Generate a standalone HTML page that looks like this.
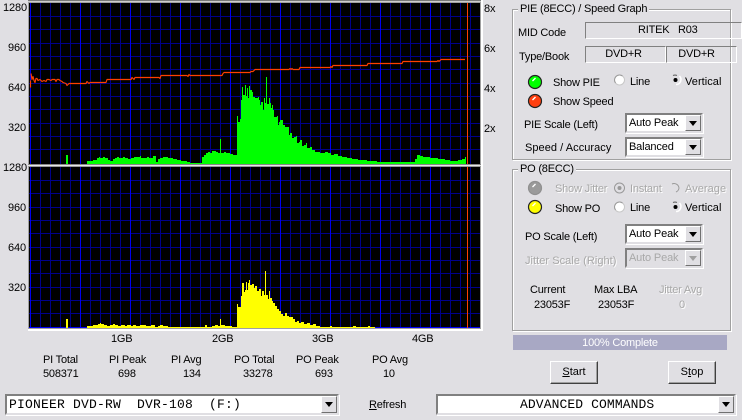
<!DOCTYPE html>
<html><head><meta charset="utf-8"><style>
html,body{margin:0;padding:0;width:742px;height:420px;overflow:hidden;background:#e0dfe3}
body{position:relative;font-family:"Liberation Sans",sans-serif;font-size:11px;color:#000}
.t{position:absolute;line-height:13px;white-space:pre;margin-top:1px;letter-spacing:-.2px}
.a{margin-top:2px;letter-spacing:-.1px}
.w{letter-spacing:.05px}
.g{color:#a8a8a8;text-shadow:1px 1px 0 #fff}
.box{position:absolute;border:1px solid #a0a0a0;box-shadow:1px 1px 0 #fff,inset 1px 1px 0 #fff;box-sizing:border-box}
.title{position:absolute;background:#e0dfe3;padding:0 2px;line-height:13px;white-space:pre;letter-spacing:-.2px}
.f{position:absolute;box-sizing:border-box;border:1px solid;border-color:#808080 #fff #fff #808080;text-align:center;line-height:15px;white-space:pre;letter-spacing:-.2px}
.c{position:absolute;box-sizing:border-box;background:#fff;border:2px solid;border-color:#808080 #e0dfe3 #e0dfe3 #808080;box-shadow:1px 1px 0 #fff;line-height:16px;padding-left:2px;white-space:pre;font-size:11px;letter-spacing:-.15px}
.c i{position:absolute;right:0;top:0;bottom:0;width:16px;box-sizing:border-box;background:#e0dfe3;border:1px solid;border-color:#fff #707070 #707070 #fff}
.c i:after{content:"";position:absolute;left:3px;top:5px;border:4px solid transparent;border-top:5px solid #000;border-bottom:0}
.dis{background:#e0dfe3;color:#a8a8a8}
.dis i:after{border-top-color:#a0a0a0}
.b{position:absolute;box-sizing:border-box;background:#e0dfe3;border:1px solid;border-color:#fff #404040 #404040 #fff;box-shadow:inset -1px -1px 0 #a0a0a0;text-align:center;line-height:21px;font-size:11px}
svg{position:absolute;left:0;top:0}
</style></head><body>
<svg width="742" height="420" shape-rendering="crispEdges">
<rect x="28" y="0" width="455" height="331" fill="#fff"/>
<rect x="28" y="0" width="453" height="329" fill="#a0a0a0"/>
<rect x="29" y="3" width="451" height="161" fill="#000"/>
<rect x="29" y="167" width="451" height="161" fill="#000"/>
<rect x="28" y="164" width="453" height="1" fill="#888"/><rect x="28" y="165" width="453" height="1" fill="#e8e8e8"/><rect x="28" y="166" width="453" height="1" fill="#999"/>
<rect x="28" y="0" width="453" height="1" fill="#777"/><rect x="28" y="1" width="453" height="1" fill="#ccc"/>
<path fill="none" stroke="#00008c" d="M40.5 3V164M50.5 3V164M60.5 3V164M70.5 3V164M90.5 3V164M100.5 3V164M110.5 3V164M120.5 3V164M140.5 3V164M150.5 3V164M160.5 3V164M170.5 3V164M190.5 3V164M200.5 3V164M210.5 3V164M220.5 3V164M240.5 3V164M250.5 3V164M260.5 3V164M270.5 3V164M290.5 3V164M300.5 3V164M310.5 3V164M320.5 3V164M340.5 3V164M350.5 3V164M360.5 3V164M370.5 3V164M390.5 3V164M400.5 3V164M410.5 3V164M420.5 3V164M440.5 3V164M450.5 3V164M460.5 3V164M470.5 3V164
M40.5 167V328M50.5 167V328M60.5 167V328M70.5 167V328M90.5 167V328M100.5 167V328M110.5 167V328M120.5 167V328M140.5 167V328M150.5 167V328M160.5 167V328M170.5 167V328M190.5 167V328M200.5 167V328M210.5 167V328M220.5 167V328M240.5 167V328M250.5 167V328M260.5 167V328M270.5 167V328M290.5 167V328M300.5 167V328M310.5 167V328M320.5 167V328M340.5 167V328M350.5 167V328M360.5 167V328M370.5 167V328M390.5 167V328M400.5 167V328M410.5 167V328M420.5 167V328M440.5 167V328M450.5 167V328M460.5 167V328M470.5 167V328
M29 16.5H480M29 29.5H480M29 43.5H480M29 56.5H480M29 69.5H480M29 83.5H480M29 96.5H480M29 109.5H480M29 123.5H480M29 136.5H480M29 149.5H480
M29 180.5H480M29 193.5H480M29 207.5H480M29 220.5H480M29 233.5H480M29 247.5H480M29 260.5H480M29 273.5H480M29 287.5H480M29 300.5H480M29 313.5H480"/>
<path fill="none" stroke="#0000f0" d="M30.5 3V164M80.5 3V164M130.5 3V164M180.5 3V164M230.5 3V164M280.5 3V164M330.5 3V164M380.5 3V164M430.5 3V164M30.5 167V328M80.5 167V328M130.5 167V328M180.5 167V328M230.5 167V328M280.5 167V328M330.5 167V328M380.5 167V328M430.5 167V328M29 327.5H480"/>
<path fill="#00ff00" d="M66 164V155H68V164ZM87 164V161H93V160H97V158H99V157H100V158H103V157H105V158H108V160H110V161H113V159H115V158H117V157H119V158H123V157H125V158H128V159H131V158H134V157H140V156H141V158H147V157H149V158H153V156H156V162H158V159H160V158H163V157H168V158H173V159H177V160H181V161H187V162H190V163H202V157H204V155H206V153H208V152H210V153H212V151H216V152H218V153H220V139H221V153H224V152H226V153H230V154H233V155H237V116H238V122H240V119H241V100H242V87H243V95H245V85H246V96H247V88H248V98H249V86H250V90H252V92H253V97H255V98H258V97H259V100H260V105H261V102H263V110H264V98H265V103H266V77H267V104H269V98H270V103H271V108H272V105H273V110H274V117H277V116H278V125H279V122H280V120H283V125H285V127H289V135H290V133H292V138H294V137H296V136H297V143H299V142H300V140H302V146H304V145H306V143H307V148H310V147H312V150H315V152H320V153H325V152H328V153H331V155H334V154H338V156H342V157H347V158H352V159H358V160H367V161H377V162H415V159H417V155H420V156H423V157H430V158H438V159H445V160H450V161H458V160H462V159H465V157H466V164Z"/>
<path fill="#ffff00" d="M66 328V319H68V328ZM87 328V326H93V325H98V324H100V323H101V324H104V325H107V326H110V325H113V324H115V325H118V326H121V325H125V326H127V325H131V326H133V325H136V326H140V325H146V326H151V325H155V327H158V326H160V325H163V326H168V327H205V325H207V327H212V326H215V325H218V326H220V319H221V325H225V326H232V327H237V304H238V307H241V296H242V283H244V292H245V290H246V282H247V290H248V283H249V280H250V285H252V284H254V288H255V286H257V291H259V289H261V296H262V291H264V295H265V271H266V295H268V299H269V291H270V298H272V301H273V303H275V306H277V309H279V311H281V314H283V316H285V313H287V316H289V317H293V319H295V322H297V321H299V323H301V322H304V324H307V323H310V325H313V324H316V326H320V327H330V326H332V327H353V326H356V327H368V326H370V327H375V328Z"/>
<path fill="none" stroke="#ff4000" d="M467.5 3V164M467.5 167V328"/>
<rect x="513" y="335" width="214" height="15" fill="#a8a8c4"/>
</svg>
<svg width="742" height="420">
<path transform="translate(0 .5)" fill="none" stroke="#ff4000" stroke-width="1.150" stroke-linejoin="round" d="M30.5 87V80M31 73L32 79L33 76L34 80L35 82L36 78L37 78L38 80L40 79L42 81L44 80L46 81L47 79L49 79L51 80L52 79L55 79L56 81L57 79L59 79L60 80L62 81L63 82L66 83L67 85L69 83H86L87 81L88 82L89 83L90 82H106L107 79H131L132 77L133 78L134 79L135 77H159L160 78L161 75H187L188 76L189 74L190 75H222L223 73L224 72H250L251 71H253L255 69H289L290 68L291 69L292 68L293 69H299L300 67H330L331 66L332 67L333 65H367L368 63H402L403 61H437L438 60L439 61L441 59H465"/>
</svg>

<div class="t a" style="left:3px;top:0">1280</div><div class="t a" style="left:8px;top:40px">960</div><div class="t a" style="left:8px;top:80px">640</div><div class="t a" style="left:8px;top:120px">320</div>
<div class="t a" style="left:3px;top:160px">1280</div><div class="t a" style="left:8px;top:200px">960</div><div class="t a" style="left:8px;top:240px">640</div><div class="t a" style="left:8px;top:280px">320</div>
<div class="t a" style="left:484px;top:1px">8x</div><div class="t a" style="left:484px;top:41px">6x</div><div class="t a" style="left:484px;top:81px">4x</div><div class="t a" style="left:484px;top:121px">2x</div>
<div class="t" style="left:111px;top:332px">1GB</div><div class="t" style="left:212px;top:332px">2GB</div><div class="t" style="left:312px;top:332px">3GB</div><div class="t" style="left:412px;top:332px">4GB</div>

<div class="t" style="left:43px;top:353px">PI Total</div><div class="t" style="left:43px;top:367px">508371</div>
<div class="t" style="left:109px;top:353px">PI Peak</div><div class="t" style="left:118px;top:367px">698</div>
<div class="t" style="left:171px;top:353px">PI Avg</div><div class="t" style="left:183px;top:367px">134</div>
<div class="t" style="left:234px;top:353px">PO Total</div><div class="t" style="left:243px;top:367px">33278</div>
<div class="t" style="left:296px;top:353px">PO Peak</div><div class="t" style="left:315px;top:367px">693</div>
<div class="t" style="left:372px;top:353px">PO Avg</div><div class="t" style="left:383px;top:367px">10</div>

<div class="box" style="left:512px;top:9px;width:219px;height:151px"></div>
<div class="title" style="left:518px;top:3px">PIE (8ECC) / Speed Graph</div>
<div class="t" style="left:518px;top:26px">MID Code</div>
<div class="f" style="left:585px;top:22px;width:157px;height:17px;text-align:left;padding-left:52px">RITEK   R03</div>
<div class="t" style="left:519px;top:50px">Type/Book</div>
<div class="f" style="left:585px;top:46px;width:81px;height:17px;padding-right:4px">DVD+R</div>
<div class="f" style="left:666px;top:46px;width:71px;height:17px;padding-right:10px">DVD+R</div>
<div class="t" style="left:553px;top:76px">Show PIE</div><div class="t" style="left:630px;top:75px">Line</div><div class="t w" style="left:685px;top:75px">Vertical</div>
<div class="t" style="left:553px;top:95px">Show Speed</div>
<div class="t" style="left:524px;top:118px">PIE Scale (Left)</div>
<div class="c" style="left:625px;top:113px;width:78px;height:20px">Auto Peak<i></i></div>
<div class="t w" style="left:525px;top:141px">Speed / Accuracy</div>
<div class="c" style="left:625px;top:137px;width:78px;height:20px">Balanced<i></i></div>

<div class="box" style="left:512px;top:169px;width:219px;height:162px"></div>
<div class="title" style="left:518px;top:163px">PO (8ECC)</div>
<div class="t g" style="left:555px;top:182px">Show Jitter</div><div class="t g" style="left:630px;top:182px">Instant</div><div class="t g w" style="left:685px;top:182px">Average</div>
<div class="t" style="left:555px;top:202px">Show PO</div><div class="t" style="left:630px;top:201px">Line</div><div class="t w" style="left:685px;top:201px">Vertical</div>
<div class="t" style="left:525px;top:230px">PO Scale (Left)</div>
<div class="c" style="left:625px;top:224px;width:78px;height:20px">Auto Peak<i></i></div>
<div class="t g w" style="left:525px;top:254px">Jitter Scale (Right)</div>
<div class="c dis" style="left:625px;top:248px;width:78px;height:20px">Auto Peak<i></i></div>
<div class="t" style="left:530px;top:283px">Current</div><div class="t" style="left:534px;top:298px">23053F</div>
<div class="t" style="left:594px;top:283px">Max LBA</div><div class="t" style="left:598px;top:298px">23053F</div>
<div class="t g" style="left:659px;top:283px">Jitter Avg</div><div class="t g" style="left:679px;top:298px">0</div>
<div class="t" style="left:513px;top:336px;width:214px;text-align:center;color:#fff">100% Complete</div>

<div class="b" style="left:550px;top:361px;width:48px;height:23px"><u>S</u>tart</div>
<div class="b" style="left:668px;top:361px;width:48px;height:23px">S<u>t</u>op</div>

<div class="c" style="left:5px;top:394px;width:334px;height:21px;font:13px/18px 'Liberation Mono',monospace;letter-spacing:.2px;padding-left:2px">PIONEER DVD-RW  DVR-108  (F:)<i></i></div>
<div class="t" style="left:369px;top:398px"><u>R</u>efresh</div>
<div class="c" style="left:436px;top:394px;width:300px;height:21px;font:13px/18px 'Liberation Mono',monospace;letter-spacing:.1px;padding-left:82px">ADVANCED COMMANDS<i></i></div>

<svg width="742" height="420">
<g stroke="#222" stroke-width="1.2">
<circle cx="535" cy="82" r="6.500" fill="#00ff00"/>
<circle cx="535" cy="101" r="6.500" fill="#ff4010"/>
<circle cx="535" cy="188" r="6.500" fill="#9a9a9a" stroke="#909090"/>
<circle cx="535" cy="207" r="6.500" fill="#ffff00"/>
</g>
<g fill="none" stroke="#fff" stroke-width="1.3">
<path d="M532.500 81L535.500 78"/><path d="M532.500 100L535.500 97"/><path d="M532.500 187L535.500 184"/><path d="M532.500 206L535.500 203"/>
</g>
<g fill="#fff" stroke="#c8c8c8">
<circle cx="619.500" cy="80" r="5"/>
<circle cx="619.500" cy="207" r="5"/>
</g>
<g fill="none" stroke="#999">
<path d="M615.500 83A5 5 0 0 1 622.500 76"/>
<path d="M615.500 210A5 5 0 0 1 622.500 203"/>
</g>
<g fill="none" stroke="#fff" stroke-width="1.500">
<path d="M679.500 76A5 5 0 0 1 676 84.500"/><path d="M679.500 203A5 5 0 0 1 676 211.500"/>
</g>
<g fill="none" stroke="#666">
<path d="M673 75.500A5 5 0 0 1 677 75.500"/><path d="M673 202.500A5 5 0 0 1 677 202.500"/>
</g>
<circle cx="675.500" cy="80" r="2" fill="#000"/><circle cx="675.500" cy="207" r="2" fill="#000"/>
<circle cx="619.500" cy="188" r="5" fill="#e0dfe3" stroke="#999"/><circle cx="619.500" cy="188" r="2" fill="#999"/>
<path d="M672 184A5 5 0 0 1 679 188A5 5 0 0 1 676 192" fill="none" stroke="#999"/>
</svg>
</body></html>
